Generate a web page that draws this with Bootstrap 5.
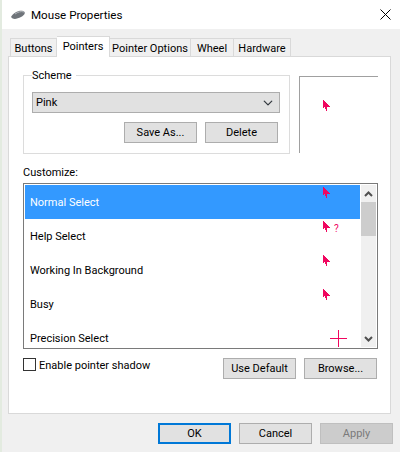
<!DOCTYPE html>
<html lang="en">
<head>
    <meta charset="UTF-8">
    <meta name="viewport" content="width=device-width, initial-scale=1.0">
    <title>Mouse Properties</title>
    <link href="https://cdn.jsdelivr.net/npm/bootstrap@5.3.0/dist/css/bootstrap.min.css" rel="stylesheet">
    <style>
        html, body { height: 452px; overflow: hidden; }
        body {
            margin: 0;
            background-color: #f0f0f0;
            color: #000;
            border-left: 2px solid #e3ebe0;
            font-family: Roboto, "Liberation Sans", sans-serif;
            font-size: 11px;
            line-height: 16px;
        }
        .title-bar { height: 29px; background-color: #fff; padding-left: 8px; }
        .title-text { margin-left: 5px; font-size: 11.6px; }
        .close-x { margin-right: 9px; }

        .dlg-tabs { height: 27px; padding-left: 8px; border: 0; flex-wrap: nowrap; }
        .dlg-tabs .nav-link {
            height: 18px;
            margin: 9px 0 0 0;
            padding: 0;
            text-align: center;
            color: #000;
            line-height: 19px;
            white-space: nowrap;
            background-color: #f0f0f0;
            border: 1px solid #d9d9d9;
            border-bottom: 0;
            border-left-width: 0;
            border-radius: 0;
        }
        .dlg-tabs .nav-item:first-child .nav-link { border-left-width: 1px; }
        .dlg-tabs .nav-link.active {
            height: 21px;
            margin-top: 7px;
            margin-bottom: -1px;
            line-height: 19px;
            background-color: #fff;
            position: relative;
            z-index: 1;
            color: #000;
            border-color: #d9d9d9;
        }
        .tab-buttons { width: 47px; }
        .tab-pointers { width: 53px; }
        .tab-options { width: 81px; }
        .tab-wheel { width: 43px; }
        .tab-hardware { width: 57px; }

        .tab-panel {
            width: 383px;
            height: 358px;
            margin-left: 6px;
            padding: 10px 12px 0 14px;
            background-color: #fff;
            border: 1px solid #d9d9d9;
        }
        .scheme-box {
            width: 267px;
            height: 87px;
            margin: 0;
            padding: 0 8px;
            border: 1px solid #dcdcdc;
        }
        .scheme-box legend {
            height: 16px;
            margin: 0;
            padding: 0 4px 0 0;
            font-size: 11px;
            line-height: 18px;
        }
        .scheme-select {
            width: 248px;
            height: 21px;
            margin-top: 9px;
            padding: 0 0 0 3px;
            color: #000;
            font-size: 11px;
            line-height: 17px;
            background-color: #e1e1e1;
            background-position: right 5px center;
            background-size: 12px 10px;
            border: 1px solid #adadad;
            border-radius: 0;
        }
        .win-btn {
            width: 73px;
            height: 21px;
            padding: 0;
            color: #000;
            font-size: 11px;
            line-height: 17px;
            background-color: #e1e1e1;
            border: 1px solid #adadad;
            border-radius: 0;
        }
        .win-btn.is-default { border: 2px solid #0078d7; line-height: 15px; }
        .win-btn:disabled { color: #7a7a7a; background-color: #ccc; border-color: #bfbfbf; opacity: 1; }
        .scheme-btns { margin: 9px 0 0 92px; gap: 8px; }

        .preview-box {
            width: 79px;
            height: 77px;
            margin: 9px 0 0 9px;
            padding: 22px 0 0 23px;
            border-top: 1px solid #a0a0a0;
            border-left: 1px solid #a0a0a0;
        }
        .customize-label { margin-top: 11px; height: 16px; }
        .list-frame {
            width: 355px;
            height: 166px;
            margin-top: 2px;
            padding: 1px;
            overflow: hidden;
            border: 1px solid #7a7a7a;
        }
        .cursor-list { width: 335px; flex: none; border-radius: 0; }
        .cursor-row {
            height: 34px;
            flex: none;
            padding: 0 0 0 5px;
            color: #000;
            background-color: #fff;
            border: 0;
            border-radius: 0;
        }
        .cursor-row.active { color: #fff; background-color: #3399ff; }
        .row-name { width: 293px; margin-top: 2px; }
        .row-icon { height: 100%; padding-top: 1px; }
        .row-cross { margin-left: 7px; }
        .help-mark { margin: 4px 0 0 3px; color: #f0065f; font-size: 10px; line-height: 10px; }

        .scroll-bar { width: 15px; flex: none; margin-left: 1px; background-color: #f0f0f0; }
        .scroll-arrow { height: 17px; }
        .scroll-thumb { height: 34px; background-color: #cdcdcd; }

        .bottom-row { margin-top: 9px; margin-right: 1px; }
        .shadow-check { min-height: 0; margin: 0; padding: 0; gap: 3px; }
        .shadow-check .form-check-input {
            width: 13px;
            height: 13px;
            margin: 0;
            float: none;
            border: 1px solid #333;
            border-radius: 0;
        }
        .bottom-btns { gap: 8px; }
        .dlg-footer { padding: 9px 7px 0 0; gap: 8px; }
        .pink-svg { display: block; }
    </style>
</head>
<body>
    <!-- Title bar -->
    <div class="title-bar d-flex align-items-center">
        <svg class="mouse-icon" width="16" height="10" viewBox="0 0 16 10">
            <path d="M1 7 C3 3 9 0 13 1 C16 2 15 5 11 7 C7 9 3 10 1 7 Z" fill="#6f747a"/>
            <path d="M5 4 C8 2 11 1 14 2" stroke="#b4b8bc" stroke-width="1" fill="none"/>
        </svg>
        <span class="title-text flex-grow-1">Mouse Properties</span>
        <svg class="close-x" width="11" height="11" viewBox="0 0 11 11">
            <path d="M0.5 0.5 L10.5 10.5 M10.5 0.5 L0.5 10.5" stroke="#000" stroke-width="1" fill="none"/>
        </svg>
    </div>

    <!-- Tabs -->
    <ul class="nav nav-tabs dlg-tabs">
        <li class="nav-item"><a class="nav-link tab-buttons" href="#">Buttons</a></li>
        <li class="nav-item"><a class="nav-link active tab-pointers" href="#">Pointers</a></li>
        <li class="nav-item"><a class="nav-link tab-options" href="#">Pointer Options</a></li>
        <li class="nav-item"><a class="nav-link tab-wheel" href="#">Wheel</a></li>
        <li class="nav-item"><a class="nav-link tab-hardware" href="#">Hardware</a></li>
    </ul>

    <div class="tab-panel">
        <div class="d-flex">
            <fieldset class="scheme-box">
                <legend class="float-none w-auto">Scheme</legend>
                <select class="form-select scheme-select">
                    <option>Pink</option>
                </select>
                <div class="d-flex scheme-btns">
                    <button type="button" class="btn win-btn">Save As...</button>
                    <button type="button" class="btn win-btn">Delete</button>
                </div>
            </fieldset>
            <div class="preview-box">
                <svg class="pink-svg" width="8" height="12" viewBox="0 0 8 12" shape-rendering="crispEdges"><polygon points="0,0 0,9 2,8 3,12 4,12 4,8 7,8" fill="#f0065f"/></svg>
            </div>
        </div>

        <div class="customize-label">Customize:</div>
        <div class="list-frame d-flex">
            <div class="list-group cursor-list flex-nowrap">
                <div class="list-group-item active cursor-row d-flex align-items-center">
                    <span class="row-name">Normal Select</span>
                    <span class="row-icon"><svg class="pink-svg" width="8" height="12" viewBox="0 0 8 12" shape-rendering="crispEdges"><polygon points="0,0 0,9 2,8 3,12 4,12 4,8 7,8" fill="#f0065f"/></svg></span>
                </div>
                <div class="list-group-item cursor-row d-flex align-items-center">
                    <span class="row-name">Help Select</span>
                    <span class="row-icon d-flex"><svg class="pink-svg" width="8" height="12" viewBox="0 0 8 12" shape-rendering="crispEdges"><polygon points="0,0 0,9 2,8 3,12 4,12 4,8 7,8" fill="#f0065f"/></svg><span class="help-mark">?</span></span>
                </div>
                <div class="list-group-item cursor-row d-flex align-items-center">
                    <span class="row-name">Working In Background</span>
                    <span class="row-icon"><svg class="pink-svg" width="8" height="12" viewBox="0 0 8 12" shape-rendering="crispEdges"><polygon points="0,0 0,9 2,8 3,12 4,12 4,8 7,8" fill="#f0065f"/></svg></span>
                </div>
                <div class="list-group-item cursor-row d-flex align-items-center">
                    <span class="row-name">Busy</span>
                    <span class="row-icon"><svg class="pink-svg" width="8" height="12" viewBox="0 0 8 12" shape-rendering="crispEdges"><polygon points="0,0 0,9 2,8 3,12 4,12 4,8 7,8" fill="#f0065f"/></svg></span>
                </div>
                <div class="list-group-item cursor-row d-flex align-items-center">
                    <span class="row-name">Precision Select</span>
                    <svg class="pink-svg row-cross" width="17" height="17" viewBox="0 0 17 17" shape-rendering="crispEdges"><path d="M8.5 0 V17 M0 8.5 H17" stroke="#f0065f" stroke-width="1" fill="none"/></svg>
                </div>
            </div>
            <div class="scroll-bar d-flex flex-column">
                <div class="scroll-arrow d-flex align-items-center justify-content-center">
                    <svg width="9" height="6" viewBox="0 0 9 6"><path d="M1 5 L4.5 1.5 L8 5" stroke="#505050" stroke-width="2" fill="none"/></svg>
                </div>
                <div class="scroll-thumb"></div>
                <div class="flex-grow-1"></div>
                <div class="scroll-arrow d-flex align-items-center justify-content-center">
                    <svg width="9" height="6" viewBox="0 0 9 6"><path d="M1 1 L4.5 4.5 L8 1" stroke="#505050" stroke-width="2" fill="none"/></svg>
                </div>
            </div>
        </div>

        <div class="bottom-row d-flex justify-content-between align-items-start">
            <div class="form-check shadow-check d-flex">
                <input class="form-check-input" type="checkbox" id="shadowCheck">
                <label class="form-check-label" for="shadowCheck">Enable pointer shadow</label>
            </div>
            <div class="d-flex bottom-btns">
                <button type="button" class="btn win-btn">Use Default</button>
                <button type="button" class="btn win-btn">Browse...</button>
            </div>
        </div>
    </div>

    <!-- Footer -->
    <div class="d-flex justify-content-end dlg-footer">
        <button type="button" class="btn win-btn is-default">OK</button>
        <button type="button" class="btn win-btn">Cancel</button>
        <button type="button" class="btn win-btn" disabled>Apply</button>
    </div>

    <script src="https://cdn.jsdelivr.net/npm/bootstrap@5.3.0/dist/js/bootstrap.bundle.min.js"></script>
</body>
</html>
